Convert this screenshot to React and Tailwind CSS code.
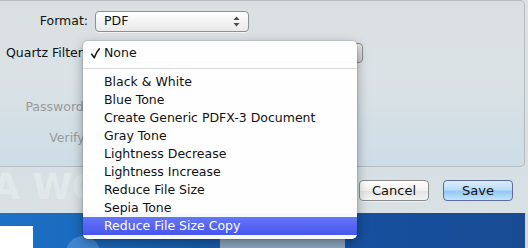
import React from "react";

const filters = [
  "Black & White",
  "Blue Tone",
  "Create Generic PDFX-3 Document",
  "Gray Tone",
  "Lightness Decrease",
  "Lightness Increase",
  "Reduce File Size",
  "Sepia Tone",
  "Reduce File Size Copy",
];

const Arrows = () => (
  <svg width="7" height="11" viewBox="0 0 7 11" className="shrink-0">
    <path d="M3.5 0.5 L6.5 4 L0.5 4 Z" fill="#4a4a4a" />
    <path d="M3.5 10.5 L6.5 7 L0.5 7 Z" fill="#4a4a4a" />
  </svg>
);

const Check = () => (
  <svg width="9" height="11" viewBox="0 0 9 11" className="ml-[8px] mr-[4px] shrink-0">
    <path d="M0.8 6.2 L3.3 9.8 Q5 4.5 8.4 0.8" fill="none" stroke="#111" strokeWidth="1.5" strokeLinecap="round" strokeLinejoin="round" />
  </svg>
);

const App = () => {
  const selected = "Reduce File Size Copy";
  return (
    <div className="relative w-[528px] h-[248px] overflow-hidden flex flex-col font-['DejaVu_Sans',sans-serif] text-[12.5px] text-[#111]">
      {/* sheet */}
      <div className="h-[213px] flex flex-col bg-[linear-gradient(#dde2e3,#d6dfe3)]">
        {/* group box */}
        <div className="h-[167px] mr-[3px] border-t border-r border-b border-[#b4bcc0] rounded-tr-[5px] rounded-br-[5px] bg-[linear-gradient(#dadfe1,#dbe2e5_45%,#cddde6)] flex flex-col pt-[10px]">
          <div className="h-[21px] flex items-center">
            <span className="w-[88px] text-right">Format:</span>
            <div className="ml-[7px] w-[154px] h-[21px] flex items-center justify-between pl-[8px] pr-[8px] rounded-[4px] border border-[#8f8f8f] bg-[linear-gradient(#ffffff,#f3f3f3_50%,#e9e9e9)] shadow-[0_1px_0_rgba(255,255,255,0.6)]">
              <span>PDF</span>
              <Arrows />
            </div>
          </div>
          <div className="mt-[11px] h-[20px] flex items-center">
            <span className="w-[88px] pl-[6px] whitespace-nowrap">Quartz Filter:</span>
            <div className="ml-[7px] w-[268px] h-[20px] rounded-[4px] border border-[#8a8a8a] bg-[linear-gradient(#e6e6e6,#cdcdcd)]" />
          </div>
          <div className="mt-[34px] h-[20px] flex items-center">
            <span className="w-[88px] text-right text-[#9a9a9a]">Password:</span>
          </div>
          <div className="mt-[11px] h-[20px] flex items-center">
            <span className="w-[88px] text-right text-[#9a9a9a]">Verify:</span>
          </div>
        </div>
        {/* buttons */}
        <div className="flex-1 flex items-start justify-between pr-[15px] bg-[linear-gradient(#d6dfe3,#d9e1e4)]">
          <span className="-mt-[2px] -ml-[8px] text-[36px] font-bold leading-[44px] text-white/30 whitespace-nowrap">A WO</span>
          <div className="mt-[13px] flex gap-[14px]">
            <button className="w-[70px] h-[21px] rounded-[4px] border border-[#8a8a8a] bg-[linear-gradient(#ffffff,#f1f1f1_50%,#e4e4e4_51%,#f3f3f3)] text-[13px] leading-none shadow-[0_1px_0_rgba(255,255,255,0.5)]">
              Cancel
            </button>
            <button className="w-[70px] h-[21px] rounded-[4px] border border-[#5d6a9a] bg-[linear-gradient(#dceefd,#b9dcf9_45%,#93c8f3_55%,#c4e4fc)] text-[13px] leading-none">
              Save
            </button>
          </div>
        </div>
      </div>

      {/* desktop below the sheet */}
      <div className="flex-1 flex">
        <div className="relative w-[525px] bg-[linear-gradient(90deg,#1d72c6,#1862b4_30%,#16509e_70%,#184b93)] overflow-hidden">
          <div className="absolute left-0 top-[13px] w-[33px] h-[30px] bg-white" />
          <div className="absolute left-[66px] top-[23px] w-[34px] h-[34px] rounded-full bg-[#3f86cf]" />
          <div className="absolute left-[220px] top-[26px] w-[125px] h-[20px] bg-[#8fa9c4]" />
        </div>
        <div className="flex-1 bg-[#cfd8dd]" />
      </div>

      {/* open popup menu */}
      <div className="absolute left-[83px] top-[41px] w-[274px] pt-[3px] pb-[4px] rounded-[5px] bg-white/[0.97] shadow-[0_4px_12px_rgba(0,0,0,0.35),0_0_0_1px_rgba(0,0,0,0.08)]">
        <div className="h-[18px] flex items-center">
          <Check />
          <span>None</span>
        </div>
        <div className="h-[11px] pt-[6px]">
          <div className="h-px bg-[#dcdcdc]" />
        </div>
        {filters.map((name) => (
          <div
            key={name}
            className={
              name === selected
                ? "h-[18px] flex items-center pl-[21px] text-white bg-[linear-gradient(#6676f6,#4656ee)]"
                : "h-[18px] flex items-center pl-[21px]"
            }
          >
            {name}
          </div>
        ))}
      </div>
    </div>
  );
};

export default App;
